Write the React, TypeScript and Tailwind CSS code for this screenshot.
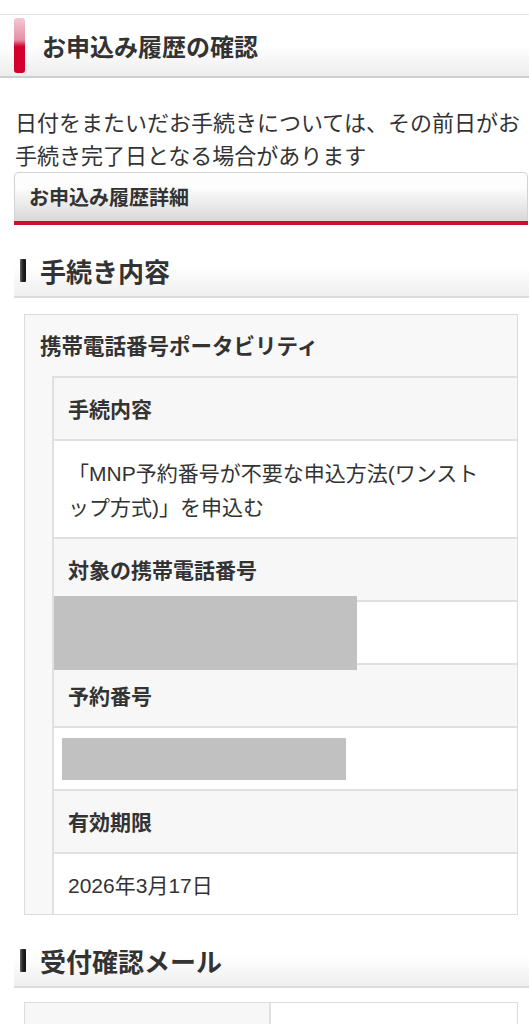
import React from "react";

function SectionHeading({ title }: { title: string }) {
  return (
    <div className="ml-[14px] h-[53px] flex items-center border-b-2 border-[#dcdcdc] bg-gradient-to-b from-white from-40% to-[#efefef]">
      <div className="ml-[6px] w-[6px] h-[23px] rounded-[1px] bg-gradient-to-r from-[#666] via-[#222] to-[#111]" />
      <div className="ml-[14px] text-[26px] leading-none font-bold text-[#333]">{title}</div>
    </div>
  );
}

function HeadRow({ label }: { label: string }) {
  return (
    <div className="h-[63px] border-t-2 border-[#e0e0e0] bg-[#f7f7f7] flex items-center pl-[14px] text-[21px] font-bold text-[#333]">
      {label}
    </div>
  );
}

export default function App() {
  return (
    <div className="w-[529px] min-h-[1024px] bg-white text-[#333] font-['Noto_Sans_CJK_JP','Noto_Sans',sans-serif] overflow-hidden">
      <div className="h-[14px]" />
      {/* Page header */}
      <div className="h-[64px] border-t border-[#e3e3e3] border-b-2 border-b-[#cfcfcf] bg-gradient-to-b from-white from-50% to-[#ededed] flex items-center">
        <div className="ml-[14px] w-[11px] h-[55px] rounded-[3px] bg-[linear-gradient(to_bottom,#f3c9d2_0%,#e48fa3_40%,#d3002d_52%,#d3002d_100%)]" />
        <div className="ml-[17px] text-[24px] leading-none font-bold text-[#333]">お申込み履歴の確認</div>
      </div>

      {/* Notice */}
      <p className="mt-[27px] pl-[15px] pr-[6px] text-[22px] leading-[33px] text-[#333]">
        日付をまたいだお手続きについては、その前日がお手続き完了日となる場合があります
      </p>

      {/* Detail bar */}
      <div className="ml-[14px] mr-[1px] mt-[1px]">
        <div className="h-[49px] rounded-t-[5px] border border-b-0 border-[#d2d2d2] bg-gradient-to-b from-[#fdfdfd] from-30% to-[#d8d8d8] flex items-center pl-[14px] text-[20px] font-bold text-[#333]">
          お申込み履歴詳細
        </div>
        <div className="h-[4px] bg-[#c9112f]" />
      </div>

      <div className="mt-[20px]">
        <SectionHeading title="手続き内容" />
      </div>

      {/* Procedure box */}
      <div className="ml-[24px] w-[494px] mt-[16px] border border-[#dcdcdc] bg-[#f8f8f8]">
        <div className="h-[61px] flex items-center pl-[15px] text-[21.5px] font-bold text-[#333]">
          携帯電話番号ポータビリティ
        </div>
        <div className="ml-[27px] border-l-2 border-[#e0e0e0]">
          <HeadRow label="手続内容" />
          <div className="h-[98px] border-t-2 border-[#e0e0e0] bg-white flex items-center pl-[14px] pt-[3px] text-[21px] leading-[34px] text-[#333] font-['Liberation_Sans','Noto_Sans_CJK_JP',sans-serif]">
            <div>
              「MNP予約番号が不要な申込方法(ワンスト
              <br />
              ップ方式)」を申込む
            </div>
          </div>
          <HeadRow label="対象の携帯電話番号" />
          <div className="relative h-[63px] border-t-2 border-[#e0e0e0] bg-white">
            <div className="absolute left-0 top-[-6px] w-[303px] h-[74px] bg-[#c1c1c1]" />
          </div>
          <HeadRow label="予約番号" />
          <div className="relative h-[63px] border-t-2 border-[#e0e0e0] bg-white">
            <div className="absolute left-[8px] top-[10px] w-[284px] h-[42px] bg-[#c1c1c1]" />
          </div>
          <HeadRow label="有効期限" />
          <div className="h-[62px] border-t-2 border-[#e0e0e0] bg-white flex items-center pl-[14px] pt-[3px] text-[21px] text-[#333] font-['Liberation_Sans','Noto_Sans_CJK_JP',sans-serif]">
            2026年3月17日
          </div>
        </div>
      </div>

      <div className="mt-[20px]">
        <SectionHeading title="受付確認メール" />
      </div>

      <div className="ml-[24px] w-[494px] mt-[14px] border border-[#dcdcdc] flex h-[60px]">
        <div className="w-[246px] bg-[#f7f7f7] border-r-2 border-[#e0e0e0]" />
        <div className="flex-1 bg-white" />
      </div>
    </div>
  );
}
